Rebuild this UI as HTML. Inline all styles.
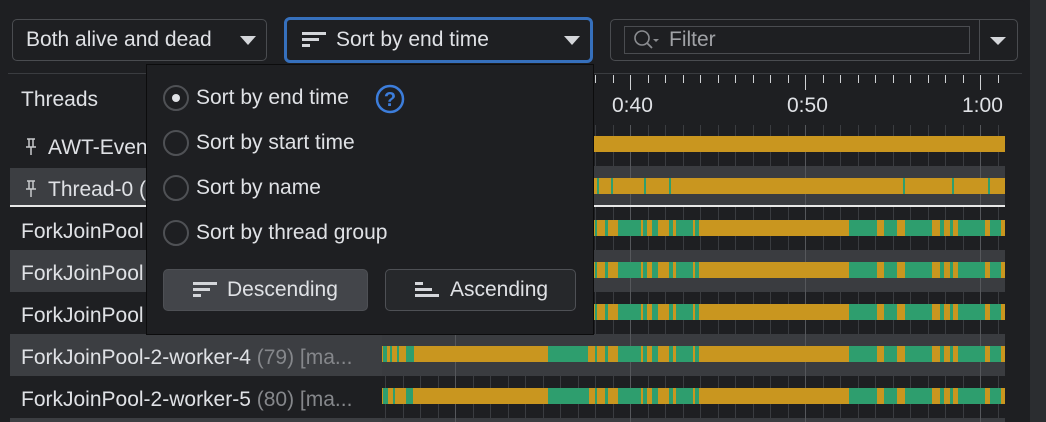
<!DOCTYPE html>
<html><head><meta charset="utf-8"><style>
*{box-sizing:border-box;margin:0;padding:0}
body{width:1046px;height:422px;background:#1e1f22;font-family:"Liberation Sans",sans-serif;color:#dfe1e5;position:relative;overflow:hidden;font-size:21px}
.a{position:absolute}
.dd{position:absolute;border:1px solid #4a4c50;border-radius:5px;background:#1e1f22}
.tri{position:absolute;width:0;height:0;border-left:8px solid transparent;border-right:8px solid transparent;border-top:9px solid #d4d6da}
.t{position:absolute;white-space:nowrap;line-height:24px}
.radio{position:absolute;width:26px;height:26px;border-radius:50%;border:2px solid #4f5155;background:#1e1f22}
.btn{position:absolute;border-radius:5px}
.ic span{position:absolute;height:3px;background:#d4d6da;left:0}
</style></head><body>
<div class="a" style="left:1030px;top:0;width:16px;height:422px;background:#2b2d30"></div>
<div class="a" style="left:0;top:0;width:1030px;height:422px;background:#1e1f22;border-top-right-radius:12px"></div>
<div class="dd" style="left:12px;top:19px;width:255px;height:42px"></div>
<div class="t" style="left:26px;top:28px">Both alive and dead</div>
<div class="tri" style="left:240px;top:36px"></div>
<div class="a" style="left:284px;top:17px;width:309px;height:46px;border:3px solid #3670bd;border-radius:6px"></div>
<div class="ic a" style="left:302px;top:32px;width:24px;height:16px"><span style="top:0;width:24px"></span><span style="top:6px;width:17px"></span><span style="top:12px;width:8px"></span></div>
<div class="t" style="left:336px;top:28px">Sort by end time</div>
<div class="tri" style="left:564px;top:36px"></div>
<div class="dd" style="left:610px;top:19px;width:408px;height:42px"></div>
<div class="a" style="left:624px;top:26px;width:346px;height:28px;border:1px solid #4a4c50;background:#1e1f22"></div>
<div class="a" style="left:979px;top:20px;width:1px;height:40px;background:#4a4c50"></div>
<svg class="a" style="left:633px;top:29px" width="32" height="22"><circle cx="9" cy="9" r="7" fill="none" stroke="#8a8c90" stroke-width="1.6"/><path d="M14 14l5 5" stroke="#8a8c90" stroke-width="1.8"/><path d="M20 10h6l-3 3z" fill="#8a8c90"/></svg>
<div class="t" style="left:669px;top:28px;color:#a0a2a6">Filter</div>
<div class="tri" style="left:990px;top:37px;border-top-width:8px"></div>
<div class="a" style="left:8px;top:73px;width:1014px;height:1px;background:#3a3c40"></div>
<div class="a" style="left:10px;top:168px;width:372px;height:38px;background:#3c3e42"></div>
<div class="a" style="left:10px;top:250px;width:372px;height:42px;background:#3c3e42"></div>
<div class="a" style="left:10px;top:334px;width:372px;height:42px;background:#3c3e42"></div>
<div class="a" style="left:10px;top:418px;width:372px;height:4px;background:#3c3e42"></div>
<div class="t" style="left:21px;top:88px">Threads</div>
<svg class="a" style="left:25px;top:138px" width="12" height="18"><path d="M2 1h8M4 1v8M8 1v8M1 9h10M6 9v8" stroke="#c8cacc" stroke-width="1.5" fill="none"/></svg>
<div class="t" style="left:48px;top:136px">AWT-Event</div>
<svg class="a" style="left:25px;top:180px" width="12" height="18"><path d="M2 1h8M4 1v8M8 1v8M1 9h10M6 9v8" stroke="#c8cacc" stroke-width="1.5" fill="none"/></svg>
<div class="t" style="left:48px;top:178px">Thread-0 (</div>
<div class="t" style="left:21px;top:220px">ForkJoinPool</div>
<div class="t" style="left:21px;top:262px">ForkJoinPool</div>
<div class="t" style="left:21px;top:304px">ForkJoinPool</div>
<div class="t" style="left:21px;top:346px">ForkJoinPool-2-worker-4 <span style="color:#85878b">(79) [ma...</span></div>
<div class="t" style="left:21px;top:388px">ForkJoinPool-2-worker-5 <span style="color:#85878b">(80) [ma...</span></div>
<div id="tl" class="a" style="left:0;top:0;width:1046px;height:422px"></div>
<div class="a" style="left:10px;top:205px;width:995px;height:2px;background:#e8e8e8"></div>
<div class="t" style="left:612px;top:94px">0:40</div>
<div class="t" style="left:787px;top:94px">0:50</div>
<div class="t" style="left:962px;top:94px">1:00</div>
<div class="a" style="left:146px;top:64px;width:448px;height:271px;background:#1e1f22;border:1px solid #0c0c0d"></div>
<div class="radio" style="left:163px;top:85px"><div class="a" style="left:7px;top:7px;width:8px;height:8px;border-radius:50%;background:#dfe1e5"></div></div>
<div class="t" style="left:196px;top:86px">Sort by end time</div>
<svg class="a" style="left:375px;top:84px" width="30" height="30"><circle cx="15" cy="15" r="13" fill="none" stroke="#3c7ddb" stroke-width="2.5"/><text x="15" y="22" font-size="20" font-weight="bold" font-family="Liberation Sans" fill="#3c7ddb" text-anchor="middle">?</text></svg>
<div class="radio" style="left:163px;top:130px"></div>
<div class="t" style="left:196px;top:131px">Sort by start time</div>
<div class="radio" style="left:163px;top:175px"></div>
<div class="t" style="left:196px;top:176px">Sort by name</div>
<div class="radio" style="left:163px;top:220px"></div>
<div class="t" style="left:196px;top:221px">Sort by thread group</div>
<div class="btn" style="left:163px;top:269px;width:205px;height:42px;background:#43454a;border:1px solid #4e5055"></div>
<div class="ic a" style="left:193px;top:282px;width:24px;height:16px"><span style="top:0;width:24px"></span><span style="top:6px;width:17px"></span><span style="top:12px;width:8px"></span></div>
<div class="t" style="left:227px;top:278px">Descending</div>
<div class="btn" style="left:385px;top:269px;width:191px;height:42px;background:#26282b;border:1px solid #4e5055"></div>
<div class="ic a" style="left:415px;top:282px;width:24px;height:16px"><span style="top:0;width:8px"></span><span style="top:6px;width:17px"></span><span style="top:12px;width:24px"></span></div>
<div class="t" style="left:450px;top:278px">Ascending</div>
<script>
var h='',G='#c9961f',N='#2e9e6e';
function r(x,y,w,hh,c){h+='<div class="a" style="left:'+x+'px;top:'+y+'px;width:'+w+'px;height:'+hh+'px;background:'+c+'"></div>';}
[[166,40],[250,42],[334,42],[418,4]].forEach(function(b){r(382,b[0],623,b[1],'#3a3c40');});
for(var s=-14;s<=21;s++){var x=Math.round(630+s*17.5);if(x<383||x>1004)continue;var maj=(s%10==0);
r(x,75,1,maj?15:8,'#cfd1d4');r(x,125,1,297,maj?'#55575b':'#3a3c40');}
function bar(y,from,greens){r(from,y,1005-from,16,G);greens.forEach(function(g){r(g[0],y,g[1]-g[0],16,N);});}
bar(136,593,[]);
bar(178,593,[[597,599],[611,613],[644,646],[669,671],[903,905],[952,954],[988,990]]);
var com=[[595,597],[605,608],[618,641],[643,647],[652,658],[669,673],[676,693],[695,699],[849,877],[884,897],[905,932],[940,944],[950,953],[958,985],[990,1001]];
bar(220,593,com);bar(262,593,com);bar(304,593,com);
bar(346,382,[[383,387],[390,392],[397,399],[406,414],[548,588]].concat(com));
bar(388,382,[[383,388],[393,395],[406,413],[548,589]].concat(com));
document.getElementById('tl').innerHTML=h;
</script>
</body></html>
